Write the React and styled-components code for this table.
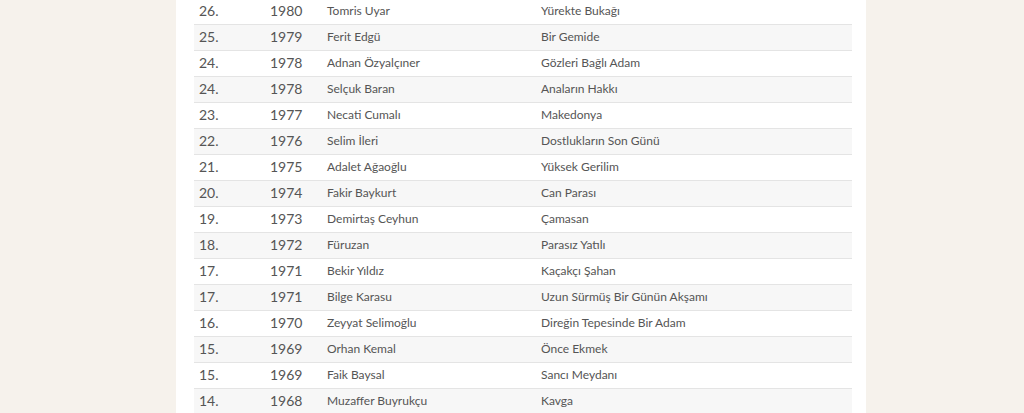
import styled, { createGlobalStyle } from "styled-components";

const GlobalStyle = createGlobalStyle`
  html, body {
    margin: 0;
    padding: 0;
    background-color: #f6f2ec;
    overflow: hidden;
  }
`;

const Page = styled.div`
  width: 1024px;
  height: 413px;
  display: flex;
  justify-content: flex-start;
  padding-left: 176px;
  box-sizing: border-box;
  overflow: hidden;
`;

const Panel = styled.main`
  flex: 0 0 690px;
  width: 690px;
  min-width: 0;
  background-color: #ffffff;
  padding: 0 14px 0 18px;
  box-sizing: border-box;
`;

const Table = styled.table`
  width: 658px;
  margin-top: -2px;
  border-collapse: collapse;
  table-layout: fixed;
  font-family: Lato, "Open Sans", sans-serif;
  color: #555555;
`;

const Row = styled.tr`
  height: 26px;
  border-top: 1px solid #e4e4e4;
  background-color: ${(p) => (p.$striped ? "#f7f7f7" : "#ffffff")};
`;

const Cell = styled.td`
  width: ${(p) => p.$w}px;
  padding: 0 0 3px 5px;
  vertical-align: middle;
  white-space: nowrap;
  font-size: ${(p) => (p.$num ? "14px" : "12px")};
`;

const rows = [
  ["26.", "1980", "Tomris Uyar", "Yürekte Bukağı"],
  ["25.", "1979", "Ferit Edgü", "Bir Gemide"],
  ["24.", "1978", "Adnan Özyalçıner", "Gözleri Bağlı Adam"],
  ["24.", "1978", "Selçuk Baran", "Anaların Hakkı"],
  ["23.", "1977", "Necati Cumalı", "Makedonya"],
  ["22.", "1976", "Selim İleri", "Dostlukların Son Günü"],
  ["21.", "1975", "Adalet Ağaoğlu", "Yüksek Gerilim"],
  ["20.", "1974", "Fakir Baykurt", "Can Parası"],
  ["19.", "1973", "Demirtaş Ceyhun", "Çamasan"],
  ["18.", "1972", "Füruzan", "Parasız Yatılı"],
  ["17.", "1971", "Bekir Yıldız", "Kaçakçı Şahan"],
  ["17.", "1971", "Bilge Karasu", "Uzun Sürmüş Bir Günün Akşamı"],
  ["16.", "1970", "Zeyyat Selimoğlu", "Direğin Tepesinde Bir Adam"],
  ["15.", "1969", "Orhan Kemal", "Önce Ekmek"],
  ["15.", "1969", "Faik Baysal", "Sancı Meydanı"],
  ["14.", "1968", "Muzaffer Buyrukçu", "Kavga"],
];

export default function App() {
  return (
    <>
      <GlobalStyle />
      <Page>
        <Panel>
          <Table>
            <tbody>
              {rows.map((r, i) => (
                <Row key={i} $striped={i % 2 === 1}>
                  <Cell $w={66} $num>{r[0]}</Cell>
                  <Cell $w={52} $num>{r[1]}</Cell>
                  <Cell $w={209}>{r[2]}</Cell>
                  <Cell $w={311}>{r[3]}</Cell>
                </Row>
              ))}
            </tbody>
          </Table>
        </Panel>
      </Page>
    </>
  );
}
